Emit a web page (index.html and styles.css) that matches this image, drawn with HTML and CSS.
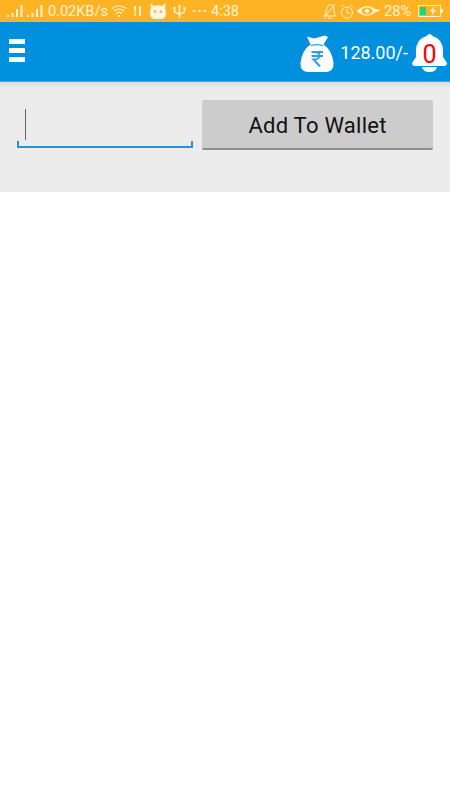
FILE: index.html
```html
<!DOCTYPE html>
<html lang="en">

<head>
  <title>Wallet</title>
  <meta charset="UTF-8">
  <meta name="viewport" content="width=device-width, initial-scale=1">
  <link rel="stylesheet" href="styles.css">
</head>

<body>
  <!-- Phone status bar -->
  <div class="status">
    <svg class="signal" width="16" height="14" viewBox="0 0 16 14"><path d="M0 11h2v2H0zM4.500 9h2v4h-2zM9 5h2v8H9zM13.500 1h2v12h-2z" /></svg>
    <svg class="signal second" width="16" height="14" viewBox="0 0 16 14"><path d="M0 11h2v2H0zM4.500 9h2v4h-2zM9 5h2v8H9zM13.500 1h2v12h-2z" /></svg>
    <span class="speed">0.02KB/s</span>
    <svg class="wifi" width="16" height="14" viewBox="0 0 16 14" fill="none" stroke="#fff3d6" stroke-width="1.200"><path d="M1 4.500Q8-1 15 4.500M3 7Q8 3 13 7M5 9.500Q8 7 11 9.500" /><path d="M7 11h2v2H7z" fill="#fff3d6" stroke="none" /></svg>
    <svg class="tools" width="8" height="12" viewBox="0 0 8 12"><path d="M0 1h2v3L1.500 5v6H.500V5L0 4zM5 1h2v10H5z" /></svg>
    <svg class="cat" width="16" height="16" viewBox="0 0 16 16"><path d="M1 5 .500 1 1.500.500 3.500 3Q8 1.500 12.500 3L14.500.500 15.500 1 15 5Q16 7.500 16 11 15.500 16 11 16H5Q.500 16 0 11 0 7.500 1 5Z" fill="#fff5e2" /><circle cx="5" cy="8.500" r="1.200" fill="#fdb324" /><circle cx="11" cy="8.500" r="1.200" fill="#fdb324" /></svg>
    <svg class="usb" width="13" height="15" viewBox="0 0 13 15" fill="none" stroke="#fff3d6" stroke-width="1.500"><path d="M6.500 1v13M1.500 4v3q0 2 5 3 5-1 5-3V4" /><path d="M5 3h3L6.500.500zM.500 3h2v2h-2zM10.500 3h2v2h-2z" fill="#fff3d6" stroke="none" /></svg>
    <span class="dots">···</span>
    <span class="clock">4:38</span>
    <svg class="silent" width="14" height="16" viewBox="0 0 14 16" fill="none" stroke="#fff3d6"><path d="M1 13h11.500L11 9V5Q10.500 1.500 7 1.500 3.500 3 3.500 7L3 10ZM5.500 15h3M1 15 12 1" /></svg>
    <svg class="alarm" width="14" height="15" viewBox="0 0 14 15" fill="none" stroke="#fff3d6"><circle cx="7" cy="8.500" r="5.500" /><path d="M7 5v4h3M1 3l2.500-2M13 3l-2.500-2" /></svg>
    <svg class="eye" width="25" height="12" viewBox="0 0 25 12"><path d="M.500 6Q11-3 19 4L25 5 19 7.500Q10 14.500 .500 6Z" fill="#fff3d6" /><ellipse cx="11" cy="6" rx="5.500" ry="3.500" fill="#fdb324" /><circle cx="11" cy="6" r="2.300" fill="#fff3d6" /></svg>
    <span class="percent">28%</span>
    <div class="battery"><span class="charge"></span><svg width="8" height="10" viewBox="0 0 8 10"><path d="M5 0 1 5.500h2.500L2.500 10 7 4H4.500Z" fill="#fff3d6" /></svg></div>
  </div>

  <div class="header">
    <div class="menu"><span></span><span></span><span></span></div>
    <svg class="bag" width="34" height="37" viewBox="0 0 34 37">
      <path d="M7 1.500 14 3.500 25 .500 28 2 23.500 9.500Q32 15 33.500 28 34 36 27 37H7Q0 36 .500 28 2 15 10.500 9.500Z" fill="#fff" />
      <path d="M11 10.500Q17 8.500 23 10.500" fill="none" stroke="#0090dd" stroke-width="1" />
      <path d="M11.500 17H23M11.500 21H23M13 17Q20 17 19.500 21 19 24.500 13.500 24.500L20 31.500" fill="none" stroke="#2a9ee0" stroke-width="2" />
    </svg>
    <span class="balance">128.00/-</span>
    <div class="notify">
      <svg width="35" height="39" viewBox="0 0 35 39">
        <path d="M14.500 3Q17.500-1 20.500 3 31 6 31 18V24L35 30Q35 33 32 33H3Q0 33 0 30L4 24V18Q4 6 14.500 3Z" fill="#fff" />
        <path d="M10 34H25Q24 39 17.500 39T10 34Z" fill="#fff" />
      </svg>
      <span class="count">0</span>
    </div>
  </div>

  <div class="panel">
    <div class="field"><span class="cursor"></span></div>
    <button class="add">Add To Wallet</button>
  </div>
</body>

</html>
```

FILE: styles.css
```css
* {
  box-sizing: border-box;
}

/* Style the body */
body {
  font-family: Roboto, "Liberation Sans", sans-serif;
  margin: 0;
  background-color: #fff;
}

/* Status bar */
.status {
  display: flex;
  align-items: center;
  height: 22px;
  padding-left: 7px;
  padding-right: 9px;
  background-color: #fdb324;
  color: #fff3d6;
  font-size: 14.5px;
}

.status svg {
  flex: none;
}

.signal {
  fill: #fff3d6;
}

.signal.second {
  margin-left: 4px;
}

.speed {
  margin-left: 5px;
  width: 60px;
  white-space: nowrap;
}

.wifi {
  margin-left: 3px;
}

.tools {
  margin-left: 7px;
  fill: #fff3d6;
}

.cat {
  margin-left: 8px;
}

.usb {
  margin-left: 7px;
}

.dots {
  margin-left: 6px;
  width: 16px;
  letter-spacing: 1px;
  font-weight: 700;
}

.clock {
  margin-left: 3px;
}

.silent {
  margin-left: auto;
}

.alarm {
  margin-left: 3px;
}

.eye {
  margin-left: 2px;
}

.percent {
  margin-left: 3px;
}

.battery {
  position: relative;
  display: flex;
  align-items: center;
  justify-content: center;
  width: 23px;
  height: 12px;
  margin-left: 7px;
  padding-left: 7px;
  border: 1px solid #fff3d6;
}

.battery:after {
  position: absolute;
  content: "";
  right: -3px;
  top: 3px;
  width: 2px;
  height: 4px;
  background-color: #fff3d6;
}

/* The fill of the battery */
.charge {
  position: absolute;
  left: 1px;
  top: 1px;
  bottom: 1px;
  width: 6px;
  background-color: #19d97e;
}

/* Blue app bar */
.header {
  display: flex;
  align-items: center;
  height: 60px;
  padding-left: 9px;
  padding-right: 3px;
  background-color: #0090dd;
  border-bottom: 1px solid #4a9fd8;
}

.menu {
  display: flex;
  flex-direction: column;
  gap: 4px;
  width: 16px;
  margin-right: auto;
  margin-bottom: 2px;
}

.menu span {
  height: 5px;
  background-color: #fff;
}

.bag {
  margin-top: 3px;
}

.balance {
  margin-left: 6px;
  margin-top: 2px;
  color: #fff;
  font-size: 18px;
  white-space: nowrap;
}

.notify {
  position: relative;
  width: 35px;
  height: 39px;
  margin-left: 4px;
  margin-top: 2px;
}

.notify svg {
  display: block;
}

.count {
  position: absolute;
  top: 7px;
  left: 0;
  width: 35px;
  text-align: center;
  color: #f00;
  font-size: 25px;
  line-height: 29px;
}

/* Grey panel with the form */
.panel {
  display: flex;
  align-items: flex-start;
  height: 110px;
  padding: 18px 17px 0;
  background: linear-gradient(#dcdcdc, #ececec 6px);
}

.field {
  position: relative;
  width: 176px;
  height: 48px;
  border-bottom: 2px solid #2b93cd;
}

/* little ticks on both ends of the underline */
.field:before,
.field:after {
  position: absolute;
  content: "";
  bottom: 0;
  width: 2px;
  height: 5px;
  background-color: #2b93cd;
}

.field:before {
  left: 0;
}

.field:after {
  right: 0;
}

.cursor {
  position: absolute;
  left: 8px;
  top: 9px;
  width: 1px;
  height: 31px;
  background-color: #666;
}

.add {
  width: 231px;
  height: 50px;
  margin-left: 9px;
  padding: 3px 0 0;
  border: 0;
  border-bottom: 2px solid #8e8e8e;
  border-radius: 2px;
  background-color: #ccc;
  color: #111;
  font-family: Roboto, "Liberation Sans", sans-serif;
  font-size: 22px;
  letter-spacing: 0.25px;
}
```
